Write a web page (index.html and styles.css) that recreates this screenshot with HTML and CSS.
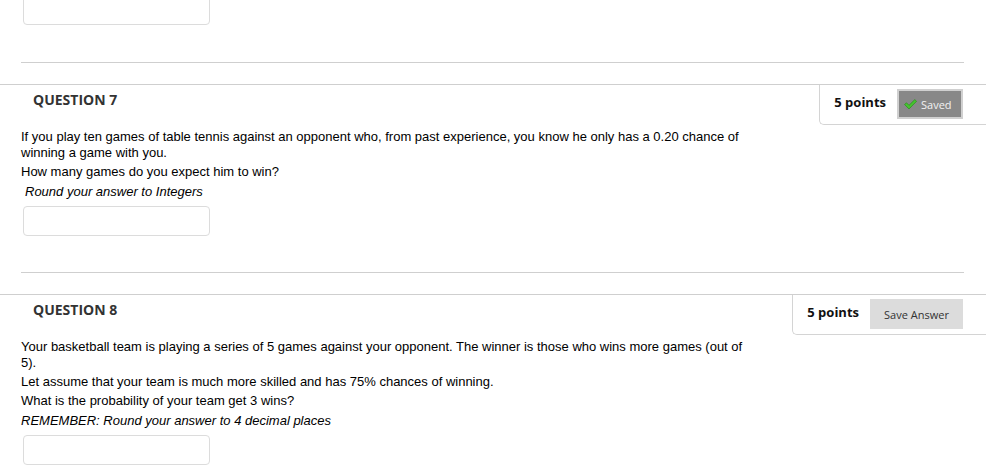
FILE: index.html
```html
<!DOCTYPE html>
<html lang="en">
<head>
<meta charset="utf-8">
<title>Quiz</title>
<link rel="stylesheet" href="styles.css">
</head>
<body>
  <div class="answer answer-top"></div>
  <hr class="divider">

  <section class="question">
    <div class="q-head">
      <h2 class="q-title">QUESTION 7</h2>
      <div class="q-points">
        <span class="points">5 points</span>
        <span class="btn btn-saved">
          <svg class="check" width="13" height="11" viewBox="0 0 13 11"><polygon points="0.5,5.5 2.5,3.8 5,6.3 10.8,0.6 12.6,2.3 5,10" fill="#45c42f" stroke="#2a8f1c" stroke-width="0.7" stroke-linejoin="round"/></svg>
          Saved
        </span>
      </div>
    </div>
    <div class="q-body">
      <p>If you play ten games of table tennis against an opponent who, from past experience, you know he only has a 0.20 chance of winning a game with you.</p>
      <p>How many games do you expect him to win?</p>
      <p class="note indent">Round your answer to Integers</p>
      <div class="answer"></div>
    </div>
  </section>

  <hr class="divider">

  <section class="question">
    <div class="q-head">
      <h2 class="q-title">QUESTION 8</h2>
      <div class="q-points">
        <span class="points">5 points</span>
        <span class="btn btn-save">Save Answer</span>
      </div>
    </div>
    <div class="q-body">
      <p>Your basketball team is playing a series of 5 games against your opponent. The winner is those who wins more games (out of 5).</p>
      <p>Let assume that your team is much more skilled and has 75% chances of winning.</p>
      <p>What is the probability of your team get 3 wins?</p>
      <p class="note">REMEMBER: Round your answer to 4 decimal places</p>
      <div class="answer"></div>
    </div>
  </section>
</body>
</html>
```

FILE: styles.css
```css
html, body {
  margin: 0;
  padding: 0;
  background: #fff;
}

body {
  font-family: "Liberation Sans", Arial, sans-serif;
  font-size: 13px;
  color: #000;
  overflow: hidden;
}

.answer {
  box-sizing: border-box;
  width: 187px;
  height: 30px;
  margin: 6px 0 36px 2px;
  border: 1px solid #dcdcdc;
  border-radius: 4px;
  background: #fff;
}

.answer-top {
  margin: -6px 0 37px 23px;
  height: 31px;
}

.divider {
  border: 0;
  border-top: 1px solid #cfcfcf;
  height: 0;
  margin: 0 22px 21px 21px;
}

.q-head {
  display: flex;
  justify-content: space-between;
  align-items: flex-start;
  border-top: 1px solid #cfcfcf;
}

.q-title {
  margin: 0;
  padding: 5px 0 0 33px;
  font-family: "Open Sans", sans-serif;
  font-size: 14px;
  font-weight: 700;
  line-height: 20px;
  color: #333;
}

.q-points {
  display: flex;
  align-items: flex-start;
  gap: 11px;
  padding: 4px 23px 5px 14px;
  border-left: 1px solid #d4d4d4;
  border-bottom: 1px solid #d4d4d4;
  border-bottom-left-radius: 5px;
}

.points {
  font-family: "Open Sans", sans-serif;
  font-size: 13px;
  font-weight: 700;
  line-height: 18px;
  color: #111;
  margin-top: 4px;
}

.btn {
  box-sizing: border-box;
  display: inline-flex;
  align-items: center;
  height: 30px;
  font-family: "Open Sans", sans-serif;
  font-size: 11px;
}

.btn-saved {
  width: 66px;
  padding: 0 0 0 5px;
  gap: 4px;
  background: #888;
  border: 2px solid #d0d0d0;
  color: #f2f2f2;
}

.check {
  display: block;
}

.btn-save {
  width: 93px;
  justify-content: center;
  background: #dcdcdc;
  color: #333;
}

.q-body {
  padding: 4px 0 0 21px;
  max-width: 735px;
}

.q-body p {
  margin: 0 0 3px;
  line-height: 16px;
}

.q-body .note {
  font-style: italic;
  margin-top: 4px;
}

.q-body .indent {
  padding-left: 4px;
}
```
